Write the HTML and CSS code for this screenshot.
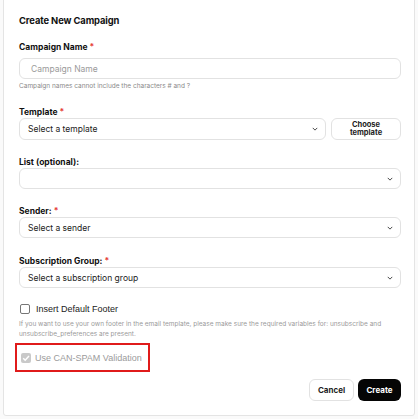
FILE: index.html
```html
<!DOCTYPE html>
<html>
<head>
<meta charset="utf-8">
<link rel="stylesheet" href="styles.css">
</head>
<body>
<div class="card">
  <h1 class="title">Create New Campaign</h1>

  <div class="field field-first">
    <div class="label">Campaign Name <span class="req">*</span></div>
    <div class="input placeholder">Campaign Name</div>
    <div class="help">Campaign names cannot include the characters # and ?</div>
  </div>

  <div class="field field-template">
    <div class="label">Template <span class="req">*</span></div>
    <div class="row">
      <div class="select grow"><span>Select a template</span><svg class="chev" viewBox="0 0 8 5"><path d="M1 1l3 3 3-3" fill="none" stroke="#444" stroke-width="1.3"/></svg></div>
      <div class="btn-choose">Choose<br>template</div>
    </div>
  </div>

  <div class="field">
    <div class="label">List (optional):</div>
    <div class="select"><span></span><svg class="chev" viewBox="0 0 8 5"><path d="M1 1l3 3 3-3" fill="none" stroke="#444" stroke-width="1.3"/></svg></div>
  </div>

  <div class="field">
    <div class="label">Sender: <span class="req">*</span></div>
    <div class="select"><span>Select a sender</span><svg class="chev" viewBox="0 0 8 5"><path d="M1 1l3 3 3-3" fill="none" stroke="#444" stroke-width="1.3"/></svg></div>
  </div>

  <div class="field field-group">
    <div class="label">Subscription Group: <span class="req">*</span></div>
    <div class="select"><span>Select a subscription group</span><svg class="chev" viewBox="0 0 8 5"><path d="M1 1l3 3 3-3" fill="none" stroke="#444" stroke-width="1.3"/></svg></div>
  </div>

  <div class="check-row">
    <span class="box"></span>
    <span class="check-label">Insert Default Footer</span>
  </div>
  <div class="help help-footer">If you want to use your own footer in the email template, please make sure the required variables for: unsubscribe and unsubscribe_preferences are present.</div>

  <div class="spam">
    <span class="box box-checked"><svg viewBox="0 0 10 10"><path d="M2.2 5.2l2 2 3.8-4.2" fill="none" stroke="#fff" stroke-width="1.5"/></svg></span>
    <span class="check-label disabled">Use CAN-SPAM Validation</span>
  </div>

  <div class="actions">
    <div class="btn btn-cancel">Cancel</div>
    <div class="btn btn-create">Create</div>
  </div>
</div>
</body>
</html>
```
FILE: styles.css
```css
html, body {
  margin: 0;
  padding: 0;
  background: #fafafa;
}
body {
  font-family: Inter, "Liberation Sans", sans-serif;
  color: #111;
}
.card {
  margin: -1px 3px 0 3px;
  height: 417px;
  box-sizing: border-box;
  background: #fff;
  border: 1px solid #e4e4e4;
  border-radius: 0 0 3px 3px;
  padding: 13px 13px 0 15px;
}
.title {
  margin: 0;
  font-size: 9.4px;
  line-height: 16px;
  font-weight: 700;
  letter-spacing: -0.1px;
  color: #111;
}
.field {
  margin-top: 17px;
}
.field-first {
  margin-top: 13px;
}
.field-template {
  margin-top: 16px;
}
.field-group {
  margin-top: 18px;
}
.label {
  font-size: 8.5px;
  line-height: 10px;
  font-weight: 700;
  color: #111;
  margin-bottom: 1px;
}
.field-first .label {
  margin-bottom: 6px;
}
.req {
  color: #e53935;
}
.input, .select {
  box-sizing: border-box;
  height: 21px;
  border: 1px solid #e2e2e2;
  border-radius: 6px;
  font-size: 8.5px;
  display: flex;
  align-items: center;
  padding: 0 7px 0 8px;
  color: #222;
  background: #fff;
}
.row .select {
  height: 22px;
}
.input.placeholder {
  color: #9a9a9a;
  padding-left: 11px;
}
.select {
  justify-content: space-between;
}
.chev {
  width: 6px;
  height: 4px;
}
.help {
  font-size: 6.5px;
  line-height: 10px;
  color: #8a8a8a;
  margin-top: 2px;
}
.row {
  display: flex;
  gap: 5px;
}
.grow {
  flex: 1;
}
.btn-choose {
  box-sizing: border-box;
  width: 70px;
  height: 22px;
  border: 1px solid #e2e2e2;
  border-radius: 6px;
  font-size: 7.5px;
  line-height: 8px;
  font-weight: 700;
  text-align: center;
  display: flex;
  align-items: center;
  justify-content: center;
  color: #222;
}
.check-row {
  display: flex;
  align-items: center;
  gap: 6px;
  margin-top: 15px;
  padding-left: 1px;
}
.box {
  box-sizing: border-box;
  width: 10px;
  height: 10px;
  border: 1px solid #767676;
  border-radius: 2px;
  background: #fff;
  display: inline-block;
  flex: none;
}
.box-checked {
  border: none;
  background: #c9c9c9;
  display: flex;
  align-items: center;
  justify-content: center;
}
.box-checked svg {
  width: 10px;
  height: 10px;
}
.check-label {
  font-family: "Liberation Sans", Arial, sans-serif;
  font-size: 9px;
  line-height: 12px;
  color: #222;
}
.check-label.disabled {
  color: #9b9b9b;
}
.help-footer {
  margin-top: 4px;
  color: #9a9a9a;
}
.spam {
  display: flex;
  align-items: center;
  gap: 4px;
  margin-left: -4px;
  margin-top: 4px;
  box-sizing: border-box;
  width: 135px;
  height: 29px;
  border: 2px solid #e01b1b;
  padding-left: 4px;
}
.actions {
  display: flex;
  justify-content: flex-end;
  gap: 4px;
  margin-top: 7px;
}
.btn {
  box-sizing: border-box;
  height: 22px;
  border-radius: 6px;
  font-size: 8px;
  font-weight: 700;
  display: flex;
  align-items: center;
  justify-content: center;
}
.btn-cancel {
  width: 45px;
  border: 1px solid #e2e2e2;
  color: #222;
  background: #fff;
}
.btn-create {
  width: 43px;
  background: #050505;
  color: #fff;
}
```
